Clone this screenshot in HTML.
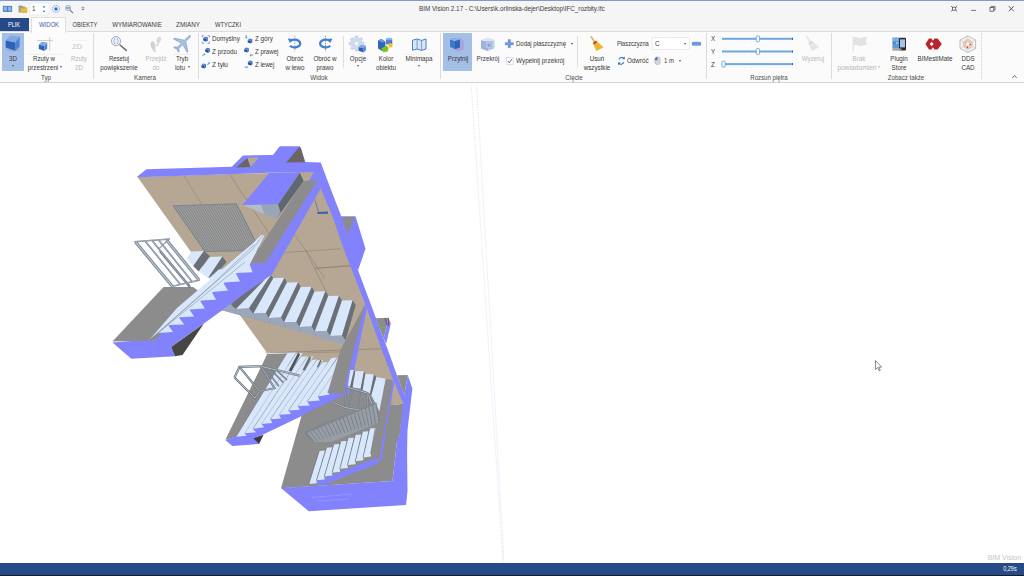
<!DOCTYPE html>
<html lang="pl"><head><meta charset="utf-8"><title>BIM Vision 2.17</title>
<style>
html,body{margin:0;padding:0;}
body{width:1024px;height:576px;overflow:hidden;background:#fff;position:relative;font-family:"Liberation Sans",sans-serif;font-size:7px;color:#333;}
.abs{position:absolute;}
.t{position:absolute;white-space:nowrap;line-height:8px;height:8px;color:#383838;}
.g{color:#b8b8b8;}
.grp{color:#4a4a4a;}
.w{color:#fff;}
.b{color:#3c62a6;}
.tab{color:#3a3a3a;}

.sep{position:absolute;width:1px;background:#dcdcdc;top:33px;height:46px;}
#titlebar{left:0;top:0;width:1024px;height:32px;background:#f5f5f5;}
#topline{left:0;top:0;width:1024px;height:1px;background:#7f9bd0;}
#ribbon{left:0;top:32px;width:1024px;height:50px;background:#fbfbfb;border-bottom:1px solid #d4d4d4;}
#status{left:0;top:563px;width:1024px;height:12px;background:#254a87;}
#statusb{left:0;top:575px;width:1024px;height:1px;background:#1a1a1a;}
.hl{position:absolute;background:#a4bfe6;}
.arr{position:absolute;width:0;height:0;border-left:1.5px solid transparent;border-right:1.5px solid transparent;border-top:2px solid #555;}
svg{position:absolute;left:0;top:0;overflow:visible;}
</style></head>
<body>
<svg width="1024" height="576" viewBox="0 0 1024 576">
<polygon points="137.50,177.00 315.00,171.50 347.50,250.00 368.00,304.00 404.00,394.00 403.50,402.50 391.00,405.00 355.00,400.00 340.00,353.00 266.75,352.50 240.50,316.00 191.00,252.00" fill="#b5a794" />
<polyline points="183.75,175.25 210.00,217.50 230.00,252.50" fill="none" stroke="#857a6b" stroke-width="0.5" />
<polyline points="229.50,174.25 260.00,220.00 275.00,242.50" fill="none" stroke="#857a6b" stroke-width="0.5" />
<polyline points="293.75,233.75 307.50,252.50 325.00,279.00" fill="none" stroke="#857a6b" stroke-width="0.5" />
<polyline points="285.00,252.50 340.00,248.75" fill="none" stroke="#857a6b" stroke-width="0.5" />
<polyline points="315.00,268.75 352.50,265.00" fill="none" stroke="#857a6b" stroke-width="0.5" />
<polyline points="305.50,250.00 314.25,268.00 328.00,295.00" fill="none" stroke="#857a6b" stroke-width="0.5" />
<polyline points="314.25,268.00 350.50,266.25" fill="none" stroke="#857a6b" stroke-width="0.5" />
<polyline points="265.50,353.00 340.50,350.00 383.00,348.75" fill="none" stroke="#857a6b" stroke-width="0.6" />
<polygon points="173.25,205.75 236.25,203.75 260.00,250.50 205.00,251.50" fill="#a39e97" />
<polyline points="173.25,205.75 205.00,251.50" fill="none" stroke="#74808e" stroke-width="0.8" />
<polyline points="175.67,205.67 207.12,251.46" fill="none" stroke="#74808e" stroke-width="0.8" />
<polyline points="178.10,205.60 209.23,251.42" fill="none" stroke="#74808e" stroke-width="0.8" />
<polyline points="180.52,205.52 211.35,251.38" fill="none" stroke="#74808e" stroke-width="0.8" />
<polyline points="182.94,205.44 213.46,251.35" fill="none" stroke="#74808e" stroke-width="0.8" />
<polyline points="185.37,205.37 215.58,251.31" fill="none" stroke="#74808e" stroke-width="0.8" />
<polyline points="187.79,205.29 217.69,251.27" fill="none" stroke="#74808e" stroke-width="0.8" />
<polyline points="190.21,205.21 219.81,251.23" fill="none" stroke="#74808e" stroke-width="0.8" />
<polyline points="192.63,205.13 221.92,251.19" fill="none" stroke="#74808e" stroke-width="0.8" />
<polyline points="195.06,205.06 224.04,251.15" fill="none" stroke="#74808e" stroke-width="0.8" />
<polyline points="197.48,204.98 226.15,251.12" fill="none" stroke="#74808e" stroke-width="0.8" />
<polyline points="199.90,204.90 228.27,251.08" fill="none" stroke="#74808e" stroke-width="0.8" />
<polyline points="202.33,204.83 230.38,251.04" fill="none" stroke="#74808e" stroke-width="0.8" />
<polyline points="204.75,204.75 232.50,251.00" fill="none" stroke="#74808e" stroke-width="0.8" />
<polyline points="207.17,204.67 234.62,250.96" fill="none" stroke="#74808e" stroke-width="0.8" />
<polyline points="209.60,204.60 236.73,250.92" fill="none" stroke="#74808e" stroke-width="0.8" />
<polyline points="212.02,204.52 238.85,250.88" fill="none" stroke="#74808e" stroke-width="0.8" />
<polyline points="214.44,204.44 240.96,250.85" fill="none" stroke="#74808e" stroke-width="0.8" />
<polyline points="216.87,204.37 243.08,250.81" fill="none" stroke="#74808e" stroke-width="0.8" />
<polyline points="219.29,204.29 245.19,250.77" fill="none" stroke="#74808e" stroke-width="0.8" />
<polyline points="221.71,204.21 247.31,250.73" fill="none" stroke="#74808e" stroke-width="0.8" />
<polyline points="224.13,204.13 249.42,250.69" fill="none" stroke="#74808e" stroke-width="0.8" />
<polyline points="226.56,204.06 251.54,250.65" fill="none" stroke="#74808e" stroke-width="0.8" />
<polyline points="228.98,203.98 253.65,250.62" fill="none" stroke="#74808e" stroke-width="0.8" />
<polyline points="231.40,203.90 255.77,250.58" fill="none" stroke="#74808e" stroke-width="0.8" />
<polyline points="233.83,203.83 257.88,250.54" fill="none" stroke="#74808e" stroke-width="0.8" />
<polyline points="236.25,203.75 260.00,250.50" fill="none" stroke="#74808e" stroke-width="0.8" />
<polyline points="173.25,205.75 236.25,203.75 260.00,250.50 205.00,251.50 173.25,205.75" fill="none" stroke="#74808e" stroke-width="0.8" />
<polygon points="137.00,176.75 146.50,169.25 231.75,166.75 243.00,155.50 273.00,155.00 279.75,146.25 299.75,146.25 305.50,162.00 320.50,162.50 326.00,177.00 314.00,172.00 270.00,172.70 230.00,174.30 137.50,177.30" fill="#8282fd" />
<polygon points="236.10,167.50 247.40,157.90 250.60,167.00" fill="#6b6664" />
<polygon points="247.40,157.80 259.25,157.25 250.60,167.00" fill="#b5a794" />
<polygon points="286.10,162.50 299.30,147.00 301.00,148.00 304.90,162.25" fill="#6b6664" />
<polygon points="320.50,162.50 341.25,216.25 358.10,270.20 369.20,300.00 389.40,354.00 396.90,375.25 404.40,394.70 404.00,402.00 401.00,400.00 383.30,354.00 364.50,302.00 344.00,250.00 332.50,216.25 313.50,171.50" fill="#8282fd" />
<polygon points="340.50,216.25 355.50,216.25 365.50,248.75 358.10,270.20 356.00,266.00" fill="#8282fd" />
<polygon points="341.60,217.00 354.75,217.00 347.60,234.50" fill="#8c8c8c" />
<polygon points="375.80,318.30 388.40,317.80 383.75,338.40" fill="#8c8c8c" />
<polygon points="388.40,317.80 390.80,323.40 386.10,344.00 383.75,338.40" fill="#8282fd" />
<polyline points="388.40,318.30 388.40,325.80" fill="none" stroke="#c83030" stroke-width="1.1" />
<polyline points="385.20,318.30 387.00,325.30" fill="none" stroke="#2f55c0" stroke-width="0.9" />
<polyline points="380.00,327.40 385.20,327.40" fill="none" stroke="#78c020" stroke-width="0.9" />
<polyline points="375.30,328.00 380.00,327.50" fill="none" stroke="#50a0b0" stroke-width="0.6" />
<polygon points="396.90,375.25 407.70,375.00 404.40,394.70" fill="#8c8c8c" />
<polygon points="407.70,375.00 412.40,388.50 407.50,430.00 406.00,505.00 398.00,505.00 399.00,442.00 403.10,394.40 404.40,394.70" fill="#8282fd" />
<polygon points="269.25,173.12 299.88,172.50 278.00,204.50 242.38,205.00" fill="#8282fd" />
<polygon points="243.00,205.25 261.12,204.75 264.25,214.00" fill="#b3becd" />
<polygon points="261.12,204.75 278.00,204.50 280.50,212.50 276.12,219.00 264.25,214.00" fill="#9aa6b6" />
<polygon points="299.88,172.75 303.62,180.88 281.75,211.50 276.12,219.00 280.50,212.50 278.00,204.50" fill="#5f6872" />
<polyline points="314.25,198.12 318.62,211.88" fill="none" stroke="#3d62b4" stroke-width="0.6" />
<polygon points="317.38,211.88 328.00,211.62 328.00,213.75 317.38,214.00" fill="#3d62b4" />
<polygon points="303.60,180.90 317.40,180.60 265.50,262.75 249.50,263.50" fill="#8c8c8c" />
<polygon points="313.75,171.75 317.40,180.60 320.50,188.75 271.90,274.40 233.75,302.00 171.25,347.00 175.00,356.25 131.25,358.75 112.50,342.50 150.00,339.50 157.40,333.10 249.40,263.50 265.50,262.75" fill="#8282fd" />
<polygon points="171.25,347.00 203.75,323.75 182.50,355.00 175.00,356.25" fill="#454545" />
<polygon points="303.60,180.90 317.40,180.60 265.50,262.75 249.50,263.50" fill="#8c8c8c" />
<polygon points="112.40,341.50 163.60,287.00 193.00,287.00 200.00,292.00 155.00,340.50" fill="#8c8c8c" />
<polygon points="149.25,340.00 177.00,308.00 253.10,242.90 261.00,235.00 264.50,235.50 250.00,263.90 236.20,273.50 223.70,282.90 212.40,292.50 200.50,301.00 189.85,309.80 179.20,317.65 168.60,325.40 158.00,333.50" fill="#d8e7fb" />
<polygon points="157.40,333.10 173.00,331.90 168.00,325.00" fill="#d8e7fb" />
<polygon points="168.00,325.00 184.25,324.40 178.60,317.25" fill="#d8e7fb" />
<polygon points="178.60,317.25 194.25,316.50 189.25,309.40" fill="#d8e7fb" />
<polygon points="189.25,309.40 204.90,308.50 199.90,300.60" fill="#d8e7fb" />
<polygon points="199.90,300.60 216.10,299.75 211.80,292.10" fill="#d8e7fb" />
<polygon points="211.80,292.10 228.00,290.60 223.10,282.50" fill="#d8e7fb" />
<polygon points="223.10,282.50 240.00,281.50 235.60,273.10" fill="#d8e7fb" />
<polygon points="235.60,273.10 252.50,272.25 249.40,263.50" fill="#d8e7fb" />
<polyline points="150.50,339.50 252.00,250.00 262.50,236.00" fill="none" stroke="#6f7884" stroke-width="0.45" />
<polyline points="152.50,337.50 245.00,262.00" fill="none" stroke="#6f7884" stroke-width="0.45" />
<polyline points="150.00,339.70 215.00,282.00 254.50,244.50" fill="none" stroke="#6f7884" stroke-width="0.45" />
<polygon points="186.88,257.88 191.25,251.62 204.00,251.00 193.12,266.00" fill="#d8e7fb" />
<polygon points="204.00,251.00 209.75,256.00 198.75,271.62 193.12,266.00" fill="#6a7079" />
<polygon points="198.75,271.62 210.00,257.00 222.50,256.62 208.12,277.88" fill="#d8e7fb" />
<polygon points="222.50,256.62 226.50,262.25 213.12,276.62 208.12,277.88" fill="#6a7079" />
<polygon points="209.38,277.88 218.75,269.50 225.62,268.75 212.50,283.50" fill="#d8e7fb" />
<polygon points="222.00,310.25 230.75,304.25 345.75,338.00 342.00,340.00 332.00,340.00" fill="#8d98a8" />
<polygon points="253.25,313.62 265.75,313.00 284.50,277.75 273.25,278.00" fill="#d8e7fb" />
<polygon points="265.75,313.00 268.62,318.12 287.00,282.50 284.50,277.75" fill="#6a7079" />
<polygon points="253.25,313.62 265.75,313.00 268.62,318.12 269.25,322.88 255.12,318.88" fill="#9ba7b9" />
<polygon points="268.62,318.12 281.00,317.50 298.12,282.25 287.00,282.50" fill="#d8e7fb" />
<polygon points="281.00,317.50 284.00,322.62 300.75,287.00 298.12,282.25" fill="#6a7079" />
<polygon points="268.62,318.12 281.00,317.50 284.00,322.62 284.62,327.38 270.50,323.38" fill="#9ba7b9" />
<polygon points="284.00,322.62 296.25,322.00 311.75,286.75 300.75,287.00" fill="#d8e7fb" />
<polygon points="296.25,322.00 299.38,327.12 314.50,291.50 311.75,286.75" fill="#6a7079" />
<polygon points="284.00,322.62 296.25,322.00 299.38,327.12 300.00,331.88 285.88,327.88" fill="#9ba7b9" />
<polygon points="299.38,327.12 311.50,326.50 325.38,291.25 314.50,291.50" fill="#d8e7fb" />
<polygon points="311.50,326.50 314.75,331.62 328.25,296.00 325.38,291.25" fill="#6a7079" />
<polygon points="299.38,327.12 311.50,326.50 314.75,331.62 315.38,336.38 301.25,332.38" fill="#9ba7b9" />
<polygon points="314.75,331.62 326.75,331.00 339.00,295.75 328.25,296.00" fill="#d8e7fb" />
<polygon points="326.75,331.00 330.12,336.12 342.00,300.50 339.00,295.75" fill="#6a7079" />
<polygon points="314.75,331.62 326.75,331.00 330.12,336.12 330.75,340.88 316.62,336.88" fill="#9ba7b9" />
<polygon points="330.12,336.12 342.00,335.50 352.62,300.25 342.00,300.50" fill="#d8e7fb" />
<polygon points="342.00,335.50 345.50,340.62 355.75,305.00 352.62,300.25" fill="#6a7079" />
<polygon points="330.12,336.12 342.00,335.50 345.50,340.62 346.12,345.38 332.00,341.38" fill="#9ba7b9" />
<polygon points="235.75,309.00 248.88,308.25 271.00,275.25 265.12,279.25" fill="#d8e7fb" />
<polygon points="248.88,308.25 253.25,313.62 273.25,278.00 271.00,275.25" fill="#6a7079" />
<polygon points="235.75,309.25 248.88,308.50 253.25,313.88 254.75,319.00 237.62,314.50" fill="#9ba7b9" />
<polygon points="230.75,304.25 235.75,309.00 265.12,279.25 244.50,293.62" fill="#6a7079" />
<polygon points="222.00,310.25 230.75,304.25 235.75,309.25 237.62,314.50" fill="#9ba7b9" />
<polygon points="267.25,354.00 289.00,353.30 250.00,420.00 236.00,436.75 225.40,439.75" fill="#8c8c8c" />
<polygon points="288.00,353.00 341.00,351.50 341.00,366.00 286.00,366.00" fill="#b5a794" />
<polyline points="288.00,353.30 341.00,351.80" fill="none" stroke="#857a6b" stroke-width="0.5" />
<polygon points="303.00,412.50 341.00,394.50 352.00,385.00 392.00,385.00 392.00,420.00 300.00,425.00" fill="#8c8c8c" />
<polygon points="317.00,406.50 341.00,395.00 343.00,398.50 319.00,410.00" fill="#b5a794" />
<polygon points="225.40,440.00 236.00,436.25 261.60,423.00 288.50,409.50 317.90,395.50 337.40,386.50 345.00,383.00 349.50,384.00 348.50,393.80 341.00,397.00 306.00,414.00 254.75,438.50 259.00,444.00 232.25,446.00" fill="#8282fd" />
<polygon points="253.50,438.50 263.50,434.75 259.12,444.12" fill="#3b3b3b" />
<clipPath id="c3"><polygon points="200,300 366,300 336,393 345,450 200,450"/></clipPath><g clip-path="url(#c3)">
<polygon points="236.00,436.75 246.60,435.75 244.75,433.25 296.05,352.60 287.03,353.10" fill="#d8e7fb" />
<polyline points="236.00,436.75 287.03,353.10" fill="none" stroke="#59606a" stroke-width="0.45" />
<polygon points="244.75,433.25 256.00,432.25 252.90,428.90 302.73,352.90 295.85,353.40" fill="#d8e7fb" />
<polyline points="244.75,433.25 295.85,353.40" fill="none" stroke="#8d97a5" stroke-width="0.45" />
<polygon points="252.90,428.90 264.10,427.25 261.60,423.90 307.30,356.20 300.55,356.70" fill="#d8e7fb" />
<polyline points="252.90,428.90 300.55,356.70" fill="none" stroke="#59606a" stroke-width="0.45" />
<polygon points="261.60,423.90 272.25,422.90 270.40,419.25 313.35,356.50 307.09,357.00" fill="#d8e7fb" />
<polyline points="261.60,423.90 307.09,357.00" fill="none" stroke="#8d97a5" stroke-width="0.45" />
<polygon points="270.40,419.25 281.00,418.50 279.10,414.75 316.88,359.50 311.28,360.00" fill="#d8e7fb" />
<polyline points="270.40,419.25 311.28,360.00" fill="none" stroke="#59606a" stroke-width="0.45" />
<polygon points="279.10,414.75 291.00,414.10 288.50,410.50 323.14,359.80 316.67,360.30" fill="#d8e7fb" />
<polyline points="279.10,414.75 316.67,360.30" fill="none" stroke="#8d97a5" stroke-width="0.45" />
<polygon points="288.50,410.50 299.75,409.75 297.90,406.00 327.91,362.00 321.62,362.50" fill="#d8e7fb" />
<polyline points="288.50,410.50 321.62,362.50" fill="none" stroke="#59606a" stroke-width="0.45" />
<polygon points="297.90,406.00 309.75,405.40 307.25,401.40 337.20,357.50 331.02,358.00" fill="#d8e7fb" />
<polyline points="297.90,406.00 331.02,358.00" fill="none" stroke="#8d97a5" stroke-width="0.45" />
<polygon points="307.25,401.40 319.75,400.40 317.90,396.40 344.19,357.80 336.99,358.30" fill="#d8e7fb" />
<polyline points="307.25,401.40 336.99,358.30" fill="none" stroke="#59606a" stroke-width="0.45" />
<polygon points="317.90,396.40 329.50,394.50 327.90,392.00 341.70,371.50 334.74,372.00" fill="#d8e7fb" />
<polyline points="317.90,396.40 334.74,372.00" fill="none" stroke="#8d97a5" stroke-width="0.45" />
<polygon points="327.90,392.00 339.00,390.50 337.40,387.60 348.16,371.50 341.70,372.00" fill="#d8e7fb" />
<polyline points="327.90,392.00 341.70,372.00" fill="none" stroke="#59606a" stroke-width="0.45" />
</g>
<polygon points="298.20,352.60 300.00,354.60 291.50,371.50 288.60,370.80" fill="#50555c" />
<polygon points="309.30,356.20 311.20,357.80 305.00,370.80 302.50,370.00" fill="#6a7079" />
<polygon points="320.30,359.60 321.60,360.80 318.20,367.50 316.80,367.00" fill="#6a7079" />
<polygon points="365.00,304.50 366.25,309.00 344.00,394.00 327.50,393.00 340.50,350.00" fill="#8c8c8c" />
<polygon points="365.00,305.00 366.80,308.50 349.50,393.50 343.60,391.00" fill="#8282fd" />
<polygon points="301.50,416.00 306.00,413.30 341.00,396.50 348.00,394.00 352.00,385.00 392.00,385.00 397.50,436.00 392.50,481.00 281.00,488.25" fill="#8c8c8c" />
<polygon points="394.38,382.50 403.12,403.50 391.00,405.25 392.75,382.50" fill="#b5a794" />
<polygon points="391.00,405.25 403.12,403.75 399.00,442.00 385.00,442.00" fill="#8c8c8c" />
<polygon points="385.62,379.00 392.75,380.00 382.75,442.00 376.25,442.00 379.38,411.25" fill="#8c8c8c" />
<polygon points="392.75,380.00 394.25,382.50 383.75,442.00 382.50,442.00" fill="#8282fd" />
<polygon points="350.25,370.00 354.25,370.00 350.25,386.88 347.75,386.50" fill="#d8e7fb" />
<polygon points="355.25,371.00 364.00,371.25 360.62,388.75 352.50,387.50" fill="#d8e7fb" />
<polygon points="365.25,373.75 374.00,374.38 370.00,393.75 362.50,390.00" fill="#d8e7fb" />
<polygon points="376.25,376.88 385.62,378.75 379.38,411.25 371.25,395.00" fill="#d8e7fb" />
<polygon points="354.00,370.00 355.25,371.00 352.50,387.50 350.00,386.88" fill="#6a7079" />
<polygon points="364.00,371.25 365.25,373.75 362.50,390.00 360.62,388.75" fill="#6a7079" />
<polygon points="374.00,374.38 376.25,376.88 371.25,395.00 370.00,393.75" fill="#6a7079" />
<polygon points="281.00,488.00 392.50,481.00 397.50,436.00 406.90,436.00 407.50,491.00 406.00,505.00 308.75,511.25" fill="#8282fd" />
<polyline points="312.00,497.50 352.00,494.00" fill="none" stroke="#c9cbff" stroke-width="0.5" stroke-dasharray="0.8 0.8"/>
<polyline points="318.00,501.00 350.00,499.00" fill="none" stroke="#c9cbff" stroke-width="0.5" stroke-dasharray="0.8 0.8"/>
<polygon points="308.75,484.50 316.88,483.50 323.12,485.00 373.50,465.38 381.88,459.75 385.25,436.00 383.12,436.00 379.75,458.50 371.25,459.75" fill="#8282fd" />
<polygon points="384.00,442.00 382.50,442.00 382.75,436.00 385.00,436.00" fill="#8282fd" />
<polygon points="308.75,484.10 316.85,483.20 316.50,480.29 325.13,450.50 319.20,450.90" fill="#d8e7fb" />
<polyline points="308.75,484.10 319.20,450.90" fill="none" stroke="#59606a" stroke-width="0.6" />
<polygon points="316.50,480.29 324.60,479.39 324.25,476.48 332.36,447.30 326.40,447.70" fill="#d8e7fb" />
<polyline points="316.50,480.29 326.40,447.70" fill="none" stroke="#59606a" stroke-width="0.6" />
<polygon points="324.25,476.48 332.35,475.58 332.00,472.67 339.60,444.10 333.60,444.50" fill="#d8e7fb" />
<polyline points="324.25,476.48 333.60,444.50" fill="none" stroke="#59606a" stroke-width="0.6" />
<polygon points="332.00,472.67 340.10,471.77 339.75,468.86 346.84,440.90 340.80,441.30" fill="#d8e7fb" />
<polyline points="332.00,472.67 340.80,441.30" fill="none" stroke="#59606a" stroke-width="0.6" />
<polygon points="339.75,468.86 347.85,467.96 347.50,465.05 354.08,437.70 348.00,438.10" fill="#d8e7fb" />
<polyline points="339.75,468.86 348.00,438.10" fill="none" stroke="#59606a" stroke-width="0.6" />
<polygon points="347.50,465.05 355.60,464.15 355.25,461.24 361.33,434.50 355.20,434.90" fill="#d8e7fb" />
<polyline points="347.50,465.05 355.20,434.90" fill="none" stroke="#59606a" stroke-width="0.6" />
<polygon points="355.25,461.24 363.35,460.34 363.00,457.43 368.57,431.30 362.40,431.70" fill="#d8e7fb" />
<polyline points="355.25,461.24 362.40,431.70" fill="none" stroke="#59606a" stroke-width="0.6" />
<polygon points="363.00,457.43 371.10,456.53 370.75,453.62 375.82,428.10 369.60,428.50" fill="#d8e7fb" />
<polyline points="363.00,457.43 369.60,428.50" fill="none" stroke="#59606a" stroke-width="0.6" />
<polyline points="370.75,453.62 375.30,428.20" fill="none" stroke="#59606a" stroke-width="0.6" />
<polyline points="160.00,251.00 190.00,287.00" fill="none" stroke="#6c7682" stroke-width="2.4" />
<polyline points="160.00,251.00 190.00,287.00" fill="none" stroke="#8c96a3" stroke-width="0.96" />
<polyline points="172.50,286.25 200.00,280.00" fill="none" stroke="#76828f" stroke-width="1.6" />
<polyline points="172.50,286.25 200.00,280.00" fill="none" stroke="#bac4d0" stroke-width="0.6400000000000001" />
<polyline points="145.50,241.50 180.00,284.00" fill="none" stroke="#76828f" stroke-width="1.7" />
<polyline points="145.50,241.50 180.00,284.00" fill="none" stroke="#bac4d0" stroke-width="0.68" />
<polyline points="152.50,241.00 186.00,282.50" fill="none" stroke="#76828f" stroke-width="1.7" />
<polyline points="152.50,241.00 186.00,282.50" fill="none" stroke="#bac4d0" stroke-width="0.68" />
<polyline points="159.00,240.50 192.00,281.50" fill="none" stroke="#76828f" stroke-width="1.7" />
<polyline points="159.00,240.50 192.00,281.50" fill="none" stroke="#bac4d0" stroke-width="0.68" />
<polyline points="166.50,240.00 199.00,280.00" fill="none" stroke="#76828f" stroke-width="3.0" />
<polyline points="166.50,240.00 199.00,280.00" fill="none" stroke="#bac4d0" stroke-width="1.2000000000000002" />
<polyline points="135.50,242.00 172.50,286.50" fill="none" stroke="#76828f" stroke-width="3.0" />
<polyline points="135.50,242.00 172.50,286.50" fill="none" stroke="#bac4d0" stroke-width="1.2000000000000002" />
<polyline points="134.30,241.70 170.00,238.90" fill="none" stroke="#76828f" stroke-width="1.5" />
<polyline points="134.30,241.70 170.00,238.90" fill="none" stroke="#bac4d0" stroke-width="0.6000000000000001" />
<polyline points="158.70,249.20 168.00,239.80" fill="none" stroke="#76828f" stroke-width="1.2" />
<polyline points="158.70,249.20 168.00,239.80" fill="none" stroke="#bac4d0" stroke-width="0.48" />
<polyline points="234.50,377.50 239.50,366.88 260.75,366.25 287.00,372.50 299.50,375.62" fill="none" stroke="#69737f" stroke-width="2.2" />
<polyline points="234.50,377.50 239.50,366.88 260.75,366.25 287.00,372.50 299.50,375.62" fill="none" stroke="#b7c1cd" stroke-width="1.0" />
<polyline points="234.50,377.50 255.12,398.12 259.50,391.25 239.50,366.88" fill="none" stroke="#69737f" stroke-width="2.0999999999999996" />
<polyline points="234.50,377.50 255.12,398.12 259.50,391.25 239.50,366.88" fill="none" stroke="#b7c1cd" stroke-width="0.8999999999999999" />
<polyline points="259.50,391.25 274.50,388.12 260.75,366.25" fill="none" stroke="#69737f" stroke-width="2.0" />
<polyline points="259.50,391.25 274.50,388.12 260.75,366.25" fill="none" stroke="#b7c1cd" stroke-width="0.8" />
<polyline points="265.12,368.12 278.88,386.25" fill="none" stroke="#69737f" stroke-width="1.5" />
<polyline points="265.12,368.12 278.88,386.25" fill="none" stroke="#b7c1cd" stroke-width="0.4" />
<polyline points="270.75,369.38 283.25,382.50" fill="none" stroke="#69737f" stroke-width="1.5" />
<polyline points="270.75,369.38 283.25,382.50" fill="none" stroke="#b7c1cd" stroke-width="0.4" />
<polyline points="277.00,370.62 287.00,380.00" fill="none" stroke="#69737f" stroke-width="1.5" />
<polyline points="277.00,370.62 287.00,380.00" fill="none" stroke="#b7c1cd" stroke-width="0.4" />
<polyline points="346.25,386.88 367.50,393.12 378.75,420.00" fill="none" stroke="#69737f" stroke-width="2.2" />
<polyline points="346.25,386.88 367.50,393.12 378.75,420.00" fill="none" stroke="#b7c1cd" stroke-width="1.0" />
<polyline points="346.25,386.88 345.00,407.50" fill="none" stroke="#69737f" stroke-width="1.7" />
<polyline points="346.25,386.88 345.00,407.50" fill="none" stroke="#b7c1cd" stroke-width="0.5" />
<polyline points="367.50,393.12 367.50,411.25" fill="none" stroke="#69737f" stroke-width="1.7" />
<polyline points="367.50,393.12 367.50,411.25" fill="none" stroke="#b7c1cd" stroke-width="0.5" />
<polyline points="332.50,401.88 345.00,407.50 367.50,411.25 377.50,422.50" fill="none" stroke="#69737f" stroke-width="2.0999999999999996" />
<polyline points="332.50,401.88 345.00,407.50 367.50,411.25 377.50,422.50" fill="none" stroke="#b7c1cd" stroke-width="0.8999999999999999" />
<polyline points="360.00,390.62 358.12,408.75" fill="none" stroke="#69737f" stroke-width="1.5" />
<polyline points="360.00,390.62 358.12,408.75" fill="none" stroke="#b7c1cd" stroke-width="0.4" />
<polyline points="352.50,388.75 348.75,407.50" fill="none" stroke="#69737f" stroke-width="1.4" />
<polyline points="352.50,388.75 348.75,407.50" fill="none" stroke="#b7c1cd" stroke-width="0.4" />
<polygon points="305.62,432.50 376.25,403.12 379.00,422.50 348.75,435.00 331.25,442.00 312.50,442.00" fill="#9ca4ae" opacity="0.75"/>
<polyline points="305.62,432.50 313.75,442.00" fill="none" stroke="#626a74" stroke-width="0.55" />
<polyline points="309.34,430.95 317.18,440.97" fill="none" stroke="#626a74" stroke-width="0.55" />
<polyline points="313.06,429.41 320.62,439.95" fill="none" stroke="#626a74" stroke-width="0.55" />
<polyline points="316.78,427.86 324.05,438.92" fill="none" stroke="#626a74" stroke-width="0.55" />
<polyline points="320.49,426.32 327.49,437.89" fill="none" stroke="#626a74" stroke-width="0.55" />
<polyline points="324.21,424.77 330.92,436.87" fill="none" stroke="#626a74" stroke-width="0.55" />
<polyline points="327.93,423.22 334.36,435.84" fill="none" stroke="#626a74" stroke-width="0.55" />
<polyline points="331.64,421.68 337.79,434.82" fill="none" stroke="#626a74" stroke-width="0.55" />
<polyline points="335.36,420.13 341.22,433.79" fill="none" stroke="#626a74" stroke-width="0.55" />
<polyline points="339.08,418.59 344.66,432.76" fill="none" stroke="#626a74" stroke-width="0.55" />
<polyline points="342.80,417.04 348.09,431.74" fill="none" stroke="#626a74" stroke-width="0.55" />
<polyline points="346.51,415.49 351.53,430.71" fill="none" stroke="#626a74" stroke-width="0.55" />
<polyline points="350.23,413.95 354.96,429.68" fill="none" stroke="#626a74" stroke-width="0.55" />
<polyline points="353.95,412.40 358.39,428.66" fill="none" stroke="#626a74" stroke-width="0.55" />
<polyline points="357.66,410.86 361.83,427.63" fill="none" stroke="#626a74" stroke-width="0.55" />
<polyline points="361.38,409.31 365.26,426.61" fill="none" stroke="#626a74" stroke-width="0.55" />
<polyline points="365.10,407.76 368.70,425.58" fill="none" stroke="#626a74" stroke-width="0.55" />
<polyline points="368.82,406.22 372.13,424.55" fill="none" stroke="#626a74" stroke-width="0.55" />
<polyline points="372.53,404.67 375.57,423.53" fill="none" stroke="#626a74" stroke-width="0.55" />
<polyline points="376.25,403.12 379.00,422.50" fill="none" stroke="#626a74" stroke-width="0.55" />
<polyline points="305.62,432.50 376.25,403.12" fill="none" stroke="#69737f" stroke-width="1.6" />
<polyline points="305.62,432.50 376.25,403.12" fill="none" stroke="#b7c1cd" stroke-width="0.4" />
<polyline points="305.62,432.50 313.75,442.00" fill="none" stroke="#69737f" stroke-width="1.6" />
<polyline points="305.62,432.50 313.75,442.00" fill="none" stroke="#b7c1cd" stroke-width="0.4" />
</svg>
<div class="abs" id="titlebar"></div>
<div class="abs" id="ribbon"></div>
<div class="abs" id="topline"></div>
<div class="abs" style="left:0;top:18px;width:29px;height:13px;background:#254a87"></div>
<div class="abs" style="left:31.3px;top:17.3px;width:32.4px;height:15px;background:#fdfdfd;border:1px solid #e0e0e0;border-bottom:none"></div>
<div class="abs" style="left:0;top:31px;width:32px;height:1px;background:#dcdcdc"></div>
<div class="abs" style="left:67px;top:31px;width:957px;height:1px;background:#dcdcdc"></div>
<span class="t w" style="left:14.1px;top:21px;transform:translateX(-50%) scaleX(0.803)">PLIK</span>
<span class="t b" style="left:49px;top:21px;transform:translateX(-50%) scaleX(0.847)">WIDOK</span>
<span class="t tab" style="left:85.4px;top:21px;transform:translateX(-50%) scaleX(0.816)">OBIEKTY</span>
<span class="t tab" style="left:136.75px;top:21px;transform:translateX(-50%) scaleX(0.870)">WYMIAROWANIE</span>
<span class="t tab" style="left:187.9px;top:21px;transform:translateX(-50%) scaleX(0.898)">ZMIANY</span>
<span class="t tab" style="left:227.7px;top:21px;transform:translateX(-50%) scaleX(0.832)">WTYCZKI</span>
<div class="hl" style="left:2px;top:33px;width:22px;height:38.3px"></div>
<div class="hl" style="left:443px;top:33px;width:29px;height:38.3px"></div>
<div class="sep" style="left:93px"></div>
<div class="sep" style="left:197.5px"></div>
<div class="sep" style="left:440px"></div>
<div class="sep" style="left:706px"></div>
<div class="sep" style="left:830.5px"></div>
<div class="sep" style="left:981px;background:none;border-left:1px dotted #d0d0d0"></div>
<svg width="1024" height="576" viewBox="0 0 1024 576">
<rect x="3.2" y="6.2" width="8.6" height="5.4" fill="#5e93dc" stroke="#3c6db4" stroke-width="0.6"/><line x1="7.5" y1="6.2" x2="7.5" y2="11.6" stroke="#3c6db4" stroke-width="0.5"/><rect x="4" y="7" width="2.8" height="3.6" fill="#8fb6ea"/><rect x="8.2" y="7" width="2.8" height="3.6" fill="#8fb6ea"/>
<path d="M18.6 5.6h3.6l0.6 1h2.2v5.8h-6.4z" fill="#9c9c9c"/><path d="M20.6 8.2h6.6v4.8h-6.6z" fill="#e6bc3c"/><path d="M20.6 8.2h2.4l0.5-0.8h3.7v0.8z" fill="#d3a72b"/>
<rect x="29.7" y="3" width="19.4" height="12" rx="1" fill="#fff" stroke="#e2e2e2" stroke-width="0.6"/>
<path d="M42.6 7.4l1.4-1.6l1.4 1.6z" fill="#2f6fc2"/><path d="M42.6 10.8l1.4 1.6l1.4-1.6z" fill="#2f6fc2"/>
<circle cx="56" cy="8.9" r="3.5" fill="#eaf1fb" stroke="#5a8ad2" stroke-width="0.7" stroke-dasharray="1.6 0.7"/><circle cx="56" cy="8.9" r="1.6" fill="#2f66ba"/>
<line x1="70" y1="10" x2="72.8" y2="12.9" stroke="#7d7d7d" stroke-width="1.1" stroke-linecap="round"/><circle cx="68.1" cy="8" r="2.6" fill="#dfeaf8" stroke="#8a9db8" stroke-width="0.7"/><rect x="66.4" y="7.3" width="3.4" height="1.3" fill="#4f86d2"/>
<rect x="81.6" y="6.9" width="2.8" height="0.6" fill="#555"/><path d="M81.6 8.8h2.8l-1.4 1.5z" fill="#555"/>
<ellipse cx="13" cy="49.5" rx="7" ry="2.2" fill="#9a9ad0" opacity="0.55"/>
<polygon points="5.70,40.58 10.24,35.48 19.70,36.80 15.16,42.47" fill="#7fa9e3"/><polygon points="5.70,40.58 15.16,42.47 15.16,50.80 5.70,47.40" fill="#2f62b5"/><polygon points="15.16,42.47 19.70,36.80 19.70,46.64 15.16,50.80" fill="#4a84d3"/>
<line x1="37" y1="40.5" x2="53" y2="40.5" stroke="#b5b5b5" stroke-width="0.6"/><line x1="49.7" y1="37" x2="49.7" y2="51" stroke="#b5b5b5" stroke-width="0.6"/>
<polygon points="38.80,44.87 41.52,41.81 47.20,42.60 44.48,46.00" fill="#7fa9e3"/><polygon points="38.80,44.87 44.48,46.00 44.48,51.00 38.80,48.96" fill="#2f62b5"/><polygon points="44.48,46.00 47.20,42.60 47.20,48.51 44.48,51.00" fill="#4a84d3"/>
<line x1="27" y1="54.3" x2="64" y2="54.3" stroke="#e2e2e2" stroke-width="0.6"/>
<line x1="71" y1="40.5" x2="87" y2="40.5" stroke="#ececec" stroke-width="0.6"/>
<text x="77.1" y="48.6" font-family="Liberation Sans, sans-serif" font-weight="bold" font-size="8" fill="#d4d4d4" text-anchor="middle">2D</text>
<line x1="120" y1="45" x2="126.3" y2="50.4" stroke="#6e6e6e" stroke-width="1.5" stroke-linecap="round"/><circle cx="116" cy="41.1" r="4.6" fill="#eef3fb" stroke="#a0a0a0" stroke-width="0.9"/><rect x="113.9" y="39" width="4.2" height="4.2" fill="none" stroke="#5a8ad2" stroke-width="0.8" stroke-dasharray="1.4 1.4"/>
<ellipse cx="153" cy="45.5" rx="2.2" ry="4.2" fill="#d2d2d2" transform="rotate(-12 153 45.5)"/><ellipse cx="154.5" cy="50.6" rx="1.5" ry="1.3" fill="#d2d2d2"/><ellipse cx="158.8" cy="40" rx="2.1" ry="3.6" fill="#dadada" transform="rotate(14 158.8 40)"/><ellipse cx="157.3" cy="45" rx="1.4" ry="1.2" fill="#dadada"/>
<g transform="translate(182.2 43.8) rotate(45)" fill="#a9c0de" stroke="#6b8fc0" stroke-width="0.5"><path d="M0 -11.5c0.7 0 1 1.4 1 2.8v4.6l8.6 5.6v1.2l-8.6-2.6v5.6l2.4 1.9v1l-3.4-0.9l-3.4 0.9v-1l2.4-1.9v-5.6l-8.6 2.6v-1.2l8.6-5.6v-4.6c0-1.4 0.3-2.8 1-2.8z"/></g>
<line x1="173" y1="54.3" x2="192" y2="54.3" stroke="#e2e2e2" stroke-width="0.6"/>
<polygon points="203.20,38.34 204.69,36.67 207.80,37.10 206.31,38.96" fill="#4f7fd0"/><polygon points="203.20,38.34 206.31,38.96 206.31,41.70 203.20,40.58" fill="#1f4ea8"/><polygon points="206.31,38.96 207.80,37.10 207.80,40.33 206.31,41.70" fill="#3468c0"/>
<polygon points="205.20,49.54 206.69,47.87 209.80,48.30 208.31,50.16" fill="#4f7fd0"/><polygon points="205.20,49.54 208.31,50.16 208.31,52.90 205.20,51.78" fill="#1f4ea8"/><polygon points="208.31,50.16 209.80,48.30 209.80,51.53 208.31,52.90" fill="#3468c0"/>
<polygon points="201.40,65.24 202.89,63.57 206.00,64.00 204.51,65.86" fill="#4f7fd0"/><polygon points="201.40,65.24 204.51,65.86 204.51,68.60 201.40,67.48" fill="#1f4ea8"/><polygon points="204.51,65.86 206.00,64.00 206.00,67.23 204.51,68.60" fill="#3468c0"/>
<polygon points="247.70,40.14 249.19,38.47 252.30,38.90 250.81,40.76" fill="#4f7fd0"/><polygon points="247.70,40.14 250.81,40.76 250.81,43.50 247.70,42.38" fill="#1f4ea8"/><polygon points="250.81,40.76 252.30,38.90 252.30,42.13 250.81,43.50" fill="#3468c0"/>
<polygon points="244.20,49.14 245.69,47.47 248.80,47.90 247.31,49.76" fill="#4f7fd0"/><polygon points="244.20,49.14 247.31,49.76 247.31,52.50 244.20,51.38" fill="#1f4ea8"/><polygon points="247.31,49.76 248.80,47.90 248.80,51.13 247.31,52.50" fill="#3468c0"/>
<polygon points="247.90,62.14 249.39,60.47 252.50,60.90 251.01,62.76" fill="#4f7fd0"/><polygon points="247.90,62.14 251.01,62.76 251.01,65.50 247.90,64.38" fill="#1f4ea8"/><polygon points="251.01,62.76 252.50,60.90 252.50,64.13 251.01,65.50" fill="#3468c0"/>
<path d="M202.2 37.5v-1.8h1.8M207.6 35.7h1.8v1.8M209.4 41.5v1.8h-1.8M204 43.3h-1.8v-1.8" fill="none" stroke="#4a7acc" stroke-width="0.7"/>
<path d="M202 54.3h2v-1l1.6 1.6l-1.6 1.6v-1h-2z" fill="#7aa5e6" transform="rotate(-30 203.5 54.5)"/>
<path d="M206.6 63.4h2v-1l1.6 1.6l-1.6 1.6v-1h-2z" fill="#7aa5e6" transform="rotate(-45 208 63.5)"/>
<path d="M245.6 35.2h1.4v2h1l-1.7 1.6l-1.7-1.6h1z" fill="#7aa5e6"/>
<path d="M253 54.6h-2v-1l-1.6 1.6l1.6 1.6v-1h2z" fill="#7aa5e6"/>
<path d="M244.6 66.6h2v-1l1.6 1.6l-1.6 1.6v-1h-2z" fill="#7aa5e6"/>
<line x1="294.8" y1="36" x2="294.8" y2="51.6" stroke="#6d6d6d" stroke-width="0.6" stroke-dasharray="1.2 1"/>
<path d="M290.2 41.2a5.6 3.9 0 1 1 -0.2 4.6" fill="none" stroke="#3f80d2" stroke-width="2.3"/><path d="M287.8 38.6l5.2 0.3l-3 4.2z" fill="#3f80d2"/>
<line x1="325.5" y1="36" x2="325.5" y2="51.6" stroke="#3a3a3a" stroke-width="0.6" stroke-dasharray="1.2 1"/>
<path d="M330.1 41.2a5.6 3.9 0 1 0 0.2 4.6" fill="none" stroke="#3f80d2" stroke-width="2.3"/><path d="M332.5 38.6l-5.2 0.3l3 4.2z" fill="#3f80d2"/>
<rect x="343" y="36" width="1" height="31.5" fill="#dedede"/>
<polygon points="364.14,42.61 364.14,44.59 362.01,45.05 361.45,46.40 362.63,48.23 361.23,49.63 359.40,48.45 358.05,49.01 357.59,51.14 355.61,51.14 355.15,49.01 353.80,48.45 351.97,49.63 350.57,48.23 351.75,46.40 351.19,45.05 349.06,44.59 349.06,42.61 351.19,42.15 351.75,40.80 350.57,38.97 351.97,37.57 353.80,38.75 355.15,38.19 355.61,36.06 357.59,36.06 358.05,38.19 359.40,38.75 361.23,37.57 362.63,38.97 361.45,40.80 362.01,42.15" fill="#cfdcee" stroke="#a9bdd8" stroke-width="0.5"/><circle cx="356.6" cy="43.6" r="2.3" fill="#f9f9f9" stroke="#a9bdd8" stroke-width="0.4"/>
<polygon points="358.60,47.34 360.93,44.72 365.80,45.40 363.47,48.32" fill="#7fa9e3"/><polygon points="358.60,47.34 363.47,48.32 363.47,52.60 358.60,50.85" fill="#2f62b5"/><polygon points="363.47,48.32 365.80,45.40 365.80,50.46 363.47,52.60" fill="#4a84d3"/>
<polygon points="378,40.4 381.4,39 385.4,41.4 385.4,50.2 382.4,51 378,48.6" fill="#2f66ba"/><polygon points="378,40.4 381.4,39 385.4,41.4 382.4,42.6" fill="#6d9de0"/>
<rect x="386" y="39" width="6.2" height="5.4" fill="#4a80cf"/><ellipse cx="389.1" cy="39" rx="3.1" ry="1.3" fill="#8bb2e8"/>
<polygon points="381,48.6 386.8,45.6 388.6,48 387.6,51.6 383.6,52.2" fill="#7fc21e"/>
<polygon points="388.4,43.6 392.4,43 392.4,47.2 388.8,47.6" fill="#f0c030"/><circle cx="391.6" cy="42.6" r="0.6" fill="#d02020"/>
<path d="M412.5 40.2l4.6-1.2l4.5 1.4l4.4-1.4v10l-4.4 1.4l-4.5-1.4l-4.6 1.2z" fill="#d9e6f6" stroke="#4a7fca" stroke-width="1" stroke-linejoin="round"/><line x1="417.1" y1="39" x2="417.1" y2="49" stroke="#4a7fca" stroke-width="0.7"/><line x1="421.6" y1="40.4" x2="421.6" y2="50.4" stroke="#4a7fca" stroke-width="0.7"/>
<line x1="404.2" y1="54.3" x2="434.7" y2="54.3" stroke="#e0e0e0" stroke-width="0.6" stroke-dasharray="0.8 0.6"/>
<polygon points="453,39.4 459.5,38 463.8,40.5 463.8,49.6 458,51.4 453,49" fill="#a59ad6" opacity="0.7"/>
<polygon points="450,39.6 454.6,38.2 459.8,39.8 459.8,47.6 455,49 450,47" fill="#3f78cc"/><polygon points="450,39.6 454.6,38.2 459.8,39.8 455,41.2" fill="#8fb6ea"/><polygon points="455,41.2 459.8,39.8 459.8,47.6 455,49" fill="#2f62b5"/>
<polygon points="481,40.2 487.5,37.8 494.6,40 494.6,48.4 488,51 481,48.4" fill="#c3d3ea"/><polygon points="481,40.2 487.5,37.8 494.6,40 488,42.2" fill="#dbe6f5"/><polygon points="481,40.2 488,42.2 488,51 481,48.4" fill="#9db4d8"/><rect x="485.4" y="41.6" width="6.6" height="6.6" fill="#b6c6e6" stroke="#8ea6d2" stroke-width="0.4"/><rect x="487.6" y="43.6" width="3" height="3" fill="#8ea3d6"/>
<path d="M508 39.6h2.6v2.8h2.9v2.6h-2.9v2.8h-2.6v-2.8h-2.9v-2.6h2.9z" fill="#6f9adb" stroke="#5585cf" stroke-width="0.3"/>
<rect x="506.3" y="57.4" width="6.8" height="7" fill="#fff" stroke="#c9c9c9" stroke-width="0.6"/><path d="M507.8 61l1.5 1.7l2.5-3.5" fill="none" stroke="#2a4a8a" stroke-width="0.8"/>
<rect x="577" y="36" width="1" height="31.5" fill="#dedede"/>
<g transform="translate(590.4 35.6)" opacity="1"><line x1="0.8" y1="1.2" x2="4.6" y2="7" stroke="#e0b060" stroke-width="1.6" stroke-linecap="round"/><polygon points="2.6,8 6.2,5.6 13.4,11.6 6,15.4" fill="#e8b92e"/><polygon points="2.4,7.4 5.6,5 6.8,6.6 3.6,9" fill="#d23a2a"/></g>
<g transform="translate(806 35.6)" opacity="1"><line x1="0.8" y1="1.2" x2="4.6" y2="7" stroke="#e4e4e4" stroke-width="1.6" stroke-linecap="round"/><polygon points="2.6,8 6.2,5.6 13.4,11.6 6,15.4" fill="#e6e6e6"/><polygon points="2.4,7.4 5.6,5 6.8,6.6 3.6,9" fill="#d8d8d8"/></g>
<rect x="652.2" y="37.5" width="37.4" height="12" fill="#fff" stroke="#cdcdcd" stroke-width="0.6" stroke-dasharray="0.9 0.5"/>
<rect x="692" y="42" width="9" height="3.5" rx="1.2" fill="#6f9adb" stroke="#5a86cc" stroke-width="0.3"/>
<path d="M619 59.6a3 3 0 0 1 5 -1.2M623.8 62.2a3 3 0 0 1 -5 1.2" fill="none" stroke="#2f6fc8" stroke-width="1.1"/><path d="M624.8 56.6v2.6h-2.6z" fill="#2f6fc8"/><path d="M618 65.2v-2.6h2.6z" fill="#2f6fc8"/>
<rect x="654.8" y="56.8" width="5.4" height="7.8" rx="2.6" fill="#d6d6d6" stroke="#a8a8a8" stroke-width="0.5"/><path d="M657.5 57v3.2h-2.6a2.6 2.6 0 0 1 2.6 -3.2z" fill="#4a74d8"/>
<rect x="722" y="37.8" width="71" height="2" fill="#6fa8e0"/><rect x="792" y="37.8" width="1" height="2" fill="#2a5ab0"/>
<rect x="723.2" y="42.0" width="0.5" height="0.5" fill="#c8c8c8"/>
<rect x="730.2" y="42.0" width="0.5" height="0.5" fill="#c8c8c8"/>
<rect x="737.3" y="42.0" width="0.5" height="0.5" fill="#c8c8c8"/>
<rect x="744.3" y="42.0" width="0.5" height="0.5" fill="#c8c8c8"/>
<rect x="751.3" y="42.0" width="0.5" height="0.5" fill="#c8c8c8"/>
<rect x="758.4" y="42.0" width="0.5" height="0.5" fill="#c8c8c8"/>
<rect x="765.4" y="42.0" width="0.5" height="0.5" fill="#c8c8c8"/>
<rect x="772.4" y="42.0" width="0.5" height="0.5" fill="#c8c8c8"/>
<rect x="779.4" y="42.0" width="0.5" height="0.5" fill="#c8c8c8"/>
<rect x="786.5" y="42.0" width="0.5" height="0.5" fill="#c8c8c8"/>
<rect x="793.5" y="42.0" width="0.5" height="0.5" fill="#c8c8c8"/>
<rect x="756.1999999999999" y="35.8" width="3.4" height="6" rx="1.2" fill="#f4f9ff" stroke="#4a90d8" stroke-width="0.7"/>
<rect x="722" y="50.5" width="71" height="2" fill="#6fa8e0"/><rect x="792" y="50.5" width="1" height="2" fill="#2a5ab0"/>
<rect x="723.2" y="54.7" width="0.5" height="0.5" fill="#c8c8c8"/>
<rect x="730.2" y="54.7" width="0.5" height="0.5" fill="#c8c8c8"/>
<rect x="737.3" y="54.7" width="0.5" height="0.5" fill="#c8c8c8"/>
<rect x="744.3" y="54.7" width="0.5" height="0.5" fill="#c8c8c8"/>
<rect x="751.3" y="54.7" width="0.5" height="0.5" fill="#c8c8c8"/>
<rect x="758.4" y="54.7" width="0.5" height="0.5" fill="#c8c8c8"/>
<rect x="765.4" y="54.7" width="0.5" height="0.5" fill="#c8c8c8"/>
<rect x="772.4" y="54.7" width="0.5" height="0.5" fill="#c8c8c8"/>
<rect x="779.4" y="54.7" width="0.5" height="0.5" fill="#c8c8c8"/>
<rect x="786.5" y="54.7" width="0.5" height="0.5" fill="#c8c8c8"/>
<rect x="793.5" y="54.7" width="0.5" height="0.5" fill="#c8c8c8"/>
<rect x="756.1999999999999" y="48.5" width="3.4" height="6" rx="1.2" fill="#f4f9ff" stroke="#4a90d8" stroke-width="0.7"/>
<rect x="722" y="63.099999999999994" width="71" height="2" fill="#6fa8e0"/><rect x="792" y="63.099999999999994" width="1" height="2" fill="#2a5ab0"/>
<rect x="723.2" y="67.3" width="0.5" height="0.5" fill="#c8c8c8"/>
<rect x="730.2" y="67.3" width="0.5" height="0.5" fill="#c8c8c8"/>
<rect x="737.3" y="67.3" width="0.5" height="0.5" fill="#c8c8c8"/>
<rect x="744.3" y="67.3" width="0.5" height="0.5" fill="#c8c8c8"/>
<rect x="751.3" y="67.3" width="0.5" height="0.5" fill="#c8c8c8"/>
<rect x="758.4" y="67.3" width="0.5" height="0.5" fill="#c8c8c8"/>
<rect x="765.4" y="67.3" width="0.5" height="0.5" fill="#c8c8c8"/>
<rect x="772.4" y="67.3" width="0.5" height="0.5" fill="#c8c8c8"/>
<rect x="779.4" y="67.3" width="0.5" height="0.5" fill="#c8c8c8"/>
<rect x="786.5" y="67.3" width="0.5" height="0.5" fill="#c8c8c8"/>
<rect x="793.5" y="67.3" width="0.5" height="0.5" fill="#c8c8c8"/>
<rect x="721.9" y="61.099999999999994" width="3.4" height="6" rx="1.2" fill="#f4f9ff" stroke="#4a90d8" stroke-width="0.7"/>
<rect x="852.6" y="36.6" width="1.2" height="15" fill="#e0e0e0"/><path d="M853.8 37.4c3-1.6 5 1.2 8 0.4c2-0.4 3.6-1.4 5.4-1l-1.6 4.2l1.6 4c-2.4-0.6-3.4 0.8-5.8 1c-3 0.4-4.6-2-7.6-0.4z" fill="#e2e2e2"/>
<rect x="892.4" y="37.6" width="6.6" height="11" fill="#5f98dc"/><rect x="893.2" y="38.6" width="2.2" height="2.2" fill="#8fbaf0"/><rect x="896" y="38.6" width="2.2" height="2.2" fill="#8fbaf0"/><rect x="893.2" y="42" width="2.2" height="2.2" fill="#4a80c8"/><rect x="896" y="42" width="2.2" height="2.2" fill="#8fbaf0"/>
<rect x="899" y="37.8" width="7" height="12.6" rx="0.8" fill="#2b2b2b"/><rect x="900" y="39.4" width="5" height="8" fill="#a9c3e6"/><rect x="892.4" y="48.4" width="9" height="2.2" fill="#9aa3ad"/>
<path d="M925.4 44l3.6-5.4h2.4l1.6 2.2l1.6-2.2h3l4.2 5.4l-4.2 5.4h-3l-1.6-2.2l-1.6 2.2h-2.4z" fill="#b8242a"/><path d="M929.8 44l1.9-2.2l1.9 2.2l-1.9 2.2z" fill="#fff"/>
<polygon points="967.8,35.8 975.6,40 975.6,48.4 967.8,52.6 960,48.4 960,40" fill="#f2f2f2" stroke="#9a9a9a" stroke-width="0.6"/><path d="M967.8 35.8v16.8M960 40l15.6 8.4M975.6 40l-15.6 8.4" stroke="#b4b4b4" stroke-width="0.4" fill="none"/><circle cx="967.8" cy="44.2" r="4.6" fill="#e8cdb8" stroke="#d9a98a" stroke-width="0.5"/><circle cx="967.8" cy="44.2" r="1.4" fill="#fff"/><circle cx="970.3" cy="44.4" r="0.7" fill="#d02020"/><circle cx="967.4" cy="47.2" r="0.7" fill="#d02020"/><circle cx="965.6" cy="43" r="0.6" fill="#e09060"/>
<path d="M1012.4 77.8l2.1-2.2l2.1 2.2" fill="none" stroke="#555" stroke-width="0.9"/>
<g stroke="#444" stroke-width="0.7" fill="none"><rect x="952.4" y="7.2" width="3.4" height="3"/><path d="M951 6l1.4 1.2M957.2 6l-1.4 1.2M951 11.4l1.4-1.2M957.2 11.4l-1.4-1.2"/><line x1="971" y1="10.4" x2="976" y2="10.4"/><rect x="990" y="7.6" width="3.8" height="3.6"/><path d="M991.2 7.6v-1.2h3.8v3.6h-1.2"/><path d="M1008.8 6.2l5 5M1013.8 6.2l-5 5" stroke-width="0.9"/></g>
<path d="M875.5 360.6v8.9l2.1-1.9l1.5 3.2l1.2-0.6l-1.5-3.1h2.9z" fill="#fff" stroke="#2a2a2a" stroke-width="0.55" stroke-linejoin="round"/>
<line x1="471" y1="82" x2="503" y2="562" stroke="#c9d3f0" stroke-width="0.6" stroke-dasharray="1 1"/><line x1="476.5" y1="82" x2="504" y2="562" stroke="#c9d3f0" stroke-width="0.6" stroke-dasharray="1 1"/>
</svg>
<span class="t tab" style="left:419px;top:5px;transform-origin:0 50%;transform:scaleX(0.903);">BIM Vision 2.17 - C:\Users\k.orlinska-dejer\Desktop\IFC_rozbity.ifc</span>
<span class="t tab" style="left:31.5px;top:5px;transform-origin:0 50%;transform:scaleX(0.890);">1</span>
<span class="t " style="left:13px;top:55.2px;transform:translateX(-50%) scaleX(0.890)">3D</span>
<i class="arr" style="left:11.5px;top:65px;border-top-color:#555"></i>
<span class="t " style="left:44px;top:55.2px;transform:translateX(-50%) scaleX(0.890)">Rzuty w</span>
<span class="t " style="left:42.5px;top:64.0px;transform:translateX(-50%) scaleX(0.890)">przestrzeni</span>
<i class="arr" style="left:60.0px;top:66px;border-top-color:#555"></i>
<span class="t g" style="left:79px;top:55.2px;transform:translateX(-50%) scaleX(0.890)">Rzuty</span>
<span class="t g" style="left:79px;top:64.0px;transform:translateX(-50%) scaleX(0.890)">2D</span>
<span class="t grp" style="left:46px;top:73.8px;transform:translateX(-50%) scaleX(0.890)">Typ</span>
<span class="t " style="left:119.1px;top:55.2px;transform:translateX(-50%) scaleX(0.851)">Resetuj</span>
<span class="t " style="left:119.2px;top:64.0px;transform:translateX(-50%) scaleX(0.887)">powiększenie</span>
<span class="t g" style="left:156px;top:55.2px;transform:translateX(-50%) scaleX(0.890)">Przejdź</span>
<span class="t g" style="left:156px;top:64.0px;transform:translateX(-50%) scaleX(0.890)">do</span>
<span class="t " style="left:182px;top:55.2px;transform:translateX(-50%) scaleX(0.890)">Tryb</span>
<span class="t " style="left:180px;top:64.0px;transform:translateX(-50%) scaleX(0.890)">lotu</span>
<i class="arr" style="left:187.5px;top:66px;border-top-color:#555"></i>
<span class="t grp" style="left:145px;top:73.8px;transform:translateX(-50%) scaleX(0.890)">Kamera</span>
<span class="t " style="left:212px;top:35.4px;transform-origin:0 50%;transform:scaleX(0.905);">Domyślny</span>
<span class="t " style="left:212px;top:48.4px;transform-origin:0 50%;transform:scaleX(0.905);">Z przodu</span>
<span class="t " style="left:212px;top:61.2px;transform-origin:0 50%;transform:scaleX(0.934);">Z tyłu</span>
<span class="t " style="left:254.6px;top:35.4px;transform-origin:0 50%;transform:scaleX(0.897);">Z góry</span>
<span class="t " style="left:254.6px;top:48.4px;transform-origin:0 50%;transform:scaleX(0.872);">Z prawej</span>
<span class="t " style="left:254.6px;top:61.2px;transform-origin:0 50%;transform:scaleX(0.874);">Z lewej</span>
<span class="t " style="left:295px;top:55.2px;transform:translateX(-50%) scaleX(0.890)">Obróć</span>
<span class="t " style="left:295px;top:64.0px;transform:translateX(-50%) scaleX(0.890)">w lewo</span>
<span class="t " style="left:325px;top:55.2px;transform:translateX(-50%) scaleX(0.890)">Obróć w</span>
<span class="t " style="left:325px;top:64.0px;transform:translateX(-50%) scaleX(0.890)">prawo</span>
<span class="t grp" style="left:319px;top:73.8px;transform:translateX(-50%) scaleX(0.890)">Widok</span>
<span class="t " style="left:358px;top:55.2px;transform:translateX(-50%) scaleX(0.890)">Opcje</span>
<i class="arr" style="left:356.5px;top:65px;border-top-color:#555"></i>
<span class="t " style="left:385.5px;top:55.2px;transform:translateX(-50%) scaleX(0.890)">Kolor</span>
<span class="t " style="left:385.5px;top:64.0px;transform:translateX(-50%) scaleX(0.890)">obiektu</span>
<span class="t " style="left:419px;top:55.2px;transform:translateX(-50%) scaleX(0.890)">Minimapa</span>
<i class="arr" style="left:417.5px;top:65px;border-top-color:#555"></i>
<span class="t " style="left:457.5px;top:55.2px;transform:translateX(-50%) scaleX(0.890)">Przytnij</span>
<span class="t " style="left:488px;top:55.2px;transform:translateX(-50%) scaleX(0.890)">Przekrój</span>
<span class="t " style="left:516px;top:40px;transform-origin:0 50%;transform:scaleX(0.857);">Dodaj płaszczyznę</span>
<i class="arr" style="left:570.5px;top:43px;border-top-color:#555"></i>
<span class="t " style="left:515.5px;top:57px;transform-origin:0 50%;transform:scaleX(0.911);">Wypełnij przekrój</span>
<span class="t " style="left:597px;top:55.2px;transform:translateX(-50%) scaleX(0.890)">Usuń</span>
<span class="t " style="left:597px;top:64.0px;transform:translateX(-50%) scaleX(0.890)">wszystkie</span>
<span class="t " style="left:617px;top:40px;transform-origin:0 50%;transform:scaleX(0.817);">Płaszczyzna</span>
<span class="t " style="left:654.5px;top:39.5px;transform-origin:0 50%;transform:scaleX(0.890);">C</span>
<i class="arr" style="left:684.0px;top:43px;border-top-color:#555"></i>
<span class="t " style="left:627px;top:56.8px;transform-origin:0 50%;transform:scaleX(0.895);">Odwróć</span>
<span class="t " style="left:664.3px;top:56.8px;transform-origin:0 50%;transform:scaleX(0.840);">1 m</span>
<i class="arr" style="left:678.5px;top:60px;border-top-color:#555"></i>
<span class="t grp" style="left:573.5px;top:73.8px;transform:translateX(-50%) scaleX(0.890)">Cięcie</span>
<span class="t " style="left:711px;top:35px;transform-origin:0 50%;transform:scaleX(0.890);">X</span>
<span class="t " style="left:711px;top:48px;transform-origin:0 50%;transform:scaleX(0.890);">Y</span>
<span class="t " style="left:711px;top:61px;transform-origin:0 50%;transform:scaleX(0.890);">Z</span>
<span class="t g" style="left:813px;top:55.2px;transform:translateX(-50%) scaleX(0.890)">Wyzeruj</span>
<span class="t grp" style="left:768.5px;top:73.8px;transform:translateX(-50%) scaleX(0.868)">Rozsuń piętra</span>
<span class="t g" style="left:859px;top:55.2px;transform:translateX(-50%) scaleX(0.890)">Brak</span>
<span class="t g" style="left:857.3px;top:64.0px;transform:translateX(-50%) scaleX(0.945)">powiadomień</span>
<i class="arr" style="left:877.5px;top:66px;border-top-color:#bbb"></i>
<span class="t " style="left:899px;top:55.2px;transform:translateX(-50%) scaleX(0.890)">Plugin</span>
<span class="t " style="left:899px;top:64.0px;transform:translateX(-50%) scaleX(0.890)">Store</span>
<span class="t " style="left:934.5px;top:55.2px;transform:translateX(-50%) scaleX(0.900)">BIMestiMate</span>
<span class="t " style="left:967.5px;top:55.2px;transform:translateX(-50%) scaleX(0.890)">DDS</span>
<span class="t " style="left:967.5px;top:64.0px;transform:translateX(-50%) scaleX(0.890)">CAD</span>
<span class="t grp" style="left:906.2px;top:73.8px;transform:translateX(-50%) scaleX(0.872)">Zobacz także</span>
<div class="abs" id="status"></div><div class="abs" id="statusb"></div>
<span class="t w" style="right:7px;top:565.3px;transform-origin:100% 50%;transform:scaleX(0.857);font-size:6.4px">0,29s</span>
<span class="t " style="right:3px;top:554px;transform-origin:100% 50%;transform:scaleX(0.927);color:#c6c6c6;font-size:7.6px">BIM Vision</span>
</body></html>
